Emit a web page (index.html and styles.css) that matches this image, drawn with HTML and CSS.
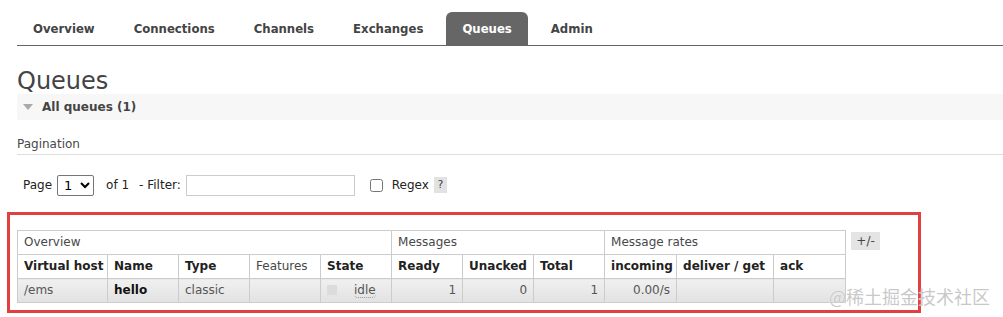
FILE: index.html
```html
<!DOCTYPE html>
<html>
<head>
    <link rel="stylesheet" href="styles.css">
</head>
<body>
    <div id="header">
        <ul class="tabs">
            <li><a href="#">Overview</a></li>
            <li><a href="#">Connections</a></li>
            <li><a href="#">Channels</a></li>
            <li><a href="#">Exchanges</a></li>
            <li><a href="#" class="selected">Queues</a></li>
            <li><a href="#">Admin</a></li>
        </ul>
    </div>

    <div id="main">
        <h1>Queues</h1>

        <div class="section">
            <span class="toggle"></span>
            <span class="section-title">All queues (1)</span>
        </div>

        <h3 class="pagination-title">Pagination</h3>

        <div class="pagination">
            <span>Page</span>
            <select class="page-select">
                <option>1</option>
            </select>
            <span class="of">of 1</span>
            <span class="filter-label">- Filter:</span>
            <input type="text" class="filter">
            <input type="checkbox" class="regex-box">
            <span class="regex-label">Regex</span>
            <span class="help">?</span>
        </div>

        <div class="highlight">
            <div class="table-wrap">
                <table class="list">
                    <colgroup>
                        <col style="width: 90px">
                        <col style="width: 71px">
                        <col style="width: 71px">
                        <col style="width: 71px">
                        <col style="width: 71px">
                        <col style="width: 71px">
                        <col style="width: 71px">
                        <col style="width: 71px">
                        <col style="width: 72px">
                        <col style="width: 97px">
                        <col style="width: 72px">
                    </colgroup>
                    <thead>
                        <tr class="group">
                            <th colspan="5">Overview</th>
                            <th colspan="3">Messages</th>
                            <th colspan="3">Message rates</th>
                        </tr>
                        <tr>
                            <th>Virtual host</th>
                            <th>Name</th>
                            <th>Type</th>
                            <th class="plain">Features</th>
                            <th>State</th>
                            <th>Ready</th>
                            <th>Unacked</th>
                            <th>Total</th>
                            <th>incoming</th>
                            <th>deliver / get</th>
                            <th>ack</th>
                        </tr>
                    </thead>
                    <tbody>
                        <tr>
                            <td class="muted">/ems</td>
                            <td class="name">hello</td>
                            <td class="muted">classic</td>
                            <td></td>
                            <td><span class="status-grey"></span><abbr class="status">idle</abbr></td>
                            <td class="num">1</td>
                            <td class="num">0</td>
                            <td class="num">1</td>
                            <td class="num">0.00/s</td>
                            <td></td>
                            <td></td>
                        </tr>
                    </tbody>
                </table>
                <span class="columns-btn">+/-</span>
            </div>
        </div>
    </div>

    <div class="watermark">@稀土掘金技术社区</div>
</body>
</html>
```

FILE: styles.css
```css
/* Base */
body {
    margin: 0;
    font-family: "DejaVu Sans", Verdana, sans-serif;
    font-size: 12px;
    color: #484848;
    background: #fff;
    position: relative;
    height: 317px;
    overflow: hidden;
}

/* Tabs */
#header {
    padding-top: 12px;
    padding-left: 17px;
}

.tabs {
    list-style: none;
    margin: 0;
    padding: 0;
    display: flex;
    border-bottom: 1px solid #666;
}

.tabs li {
    margin-right: 7px;
}

.tabs a {
    display: block;
    height: 33px;
    line-height: 33px;
    padding: 0 16px;
    font-family: "DejaVu Sans Condensed", "DejaVu Sans", sans-serif;
    font-weight: bold;
    font-size: 13px;
    color: #444;
    text-decoration: none;
    border-radius: 6px 6px 0 0;
}

.tabs a.selected {
    background: #666;
    color: #fff;
}

/* Main */
#main {
    padding-left: 17px;
}

h1 {
    margin: 22px 0 0;
    font-size: 24px;
    font-weight: normal;
    line-height: 26px;
    color: #444;
}

.section {
    height: 26px;
    display: flex;
    align-items: center;
    padding-left: 6px;
    background: #f7f7f7;
}

.toggle {
    width: 0;
    height: 0;
    border-left: 5px solid transparent;
    border-right: 5px solid transparent;
    border-top: 6px solid #aaa;
    margin-right: 9px;
}

.section-title {
    font-weight: bold;
    font-size: 12px;
    color: #444;
}

.pagination-title {
    margin: 16px 0 0;
    font-size: 12px;
    font-weight: normal;
    line-height: 16px;
    padding-bottom: 2px;
    border-bottom: 1px solid #ddd;
}

.pagination {
    display: flex;
    align-items: center;
    height: 22px;
    margin-top: 19px;
    padding-left: 6px;
    color: #222;
}

.page-select {
    margin: 0 0 0 5px;
    width: 37px;
    height: 21px;
    font-size: 13px;
    font-family: "DejaVu Sans", sans-serif;
    border: 1px solid #767676;
    border-radius: 2px;
    background: #fff;
    padding: 0 2px;
}

.of {
    margin-left: 12px;
}

.filter-label {
    margin-left: 10px;
}

.filter {
    margin: 0 0 0 5px;
    width: 169px;
    height: 21px;
    box-sizing: border-box;
    border: 1px solid #ccc;
    padding: 0 3px;
}

.regex-box {
    margin: 0 0 0 15px;
    width: 13px;
    height: 13px;
}

.regex-label {
    margin-left: 9px;
}

.help {
    margin-left: 5px;
    width: 13px;
    height: 16px;
    line-height: 16px;
    text-align: center;
    background: #e2e2e2;
    color: #444;
    font-size: 11px;
}

/* Highlighted table block */
.highlight {
    margin: 16px 0 0 -10px;
    width: 914px;
    box-sizing: border-box;
    padding: 15px 7px 7px;
    border: 3px solid #e2403f;
}

.table-wrap {
    display: flex;
    align-items: flex-start;
    gap: 5px;
}

table.list {
    border-collapse: collapse;
    table-layout: fixed;
    width: 828px;
}

.list th,
.list td {
    border: 1px solid #ccc;
    padding: 4px 6px;
    line-height: 15px;
    text-align: left;
    white-space: nowrap;
    overflow: hidden;
}

.list th {
    font-weight: bold;
    color: #222;
    background: #fff;
}

.list tr.group th,
.list th.plain {
    font-weight: normal;
    color: #484848;
}

.list tbody td {
    background: linear-gradient(#f0f0f0, #e2e2e2);
    color: #555;
}

.list td.name {
    font-weight: bold;
    color: #111;
}

.list td.num {
    text-align: right;
}

.status-grey {
    display: inline-block;
    width: 10px;
    height: 10px;
    background: #dcdcdc;
    vertical-align: -1px;
    margin-right: 17px;
}

abbr.status {
    text-decoration: none;
    border-bottom: 1px dotted #999;
    border-radius: 0 0 4px 4px;
}

.columns-btn {
    margin-top: 2px;
    width: 29px;
    height: 18px;
    line-height: 18px;
    text-align: center;
    background: #e4e4e4;
    color: #444;
}

/* Overlay text */
.watermark {
    position: absolute;
    left: 829px;
    top: 284px;
    font-family: "Noto Sans CJK SC", sans-serif;
    font-size: 18px;
    line-height: 25px;
    color: rgba(190, 190, 190, 0.85);
    text-shadow: 0 0 1px #fff;
}
```
